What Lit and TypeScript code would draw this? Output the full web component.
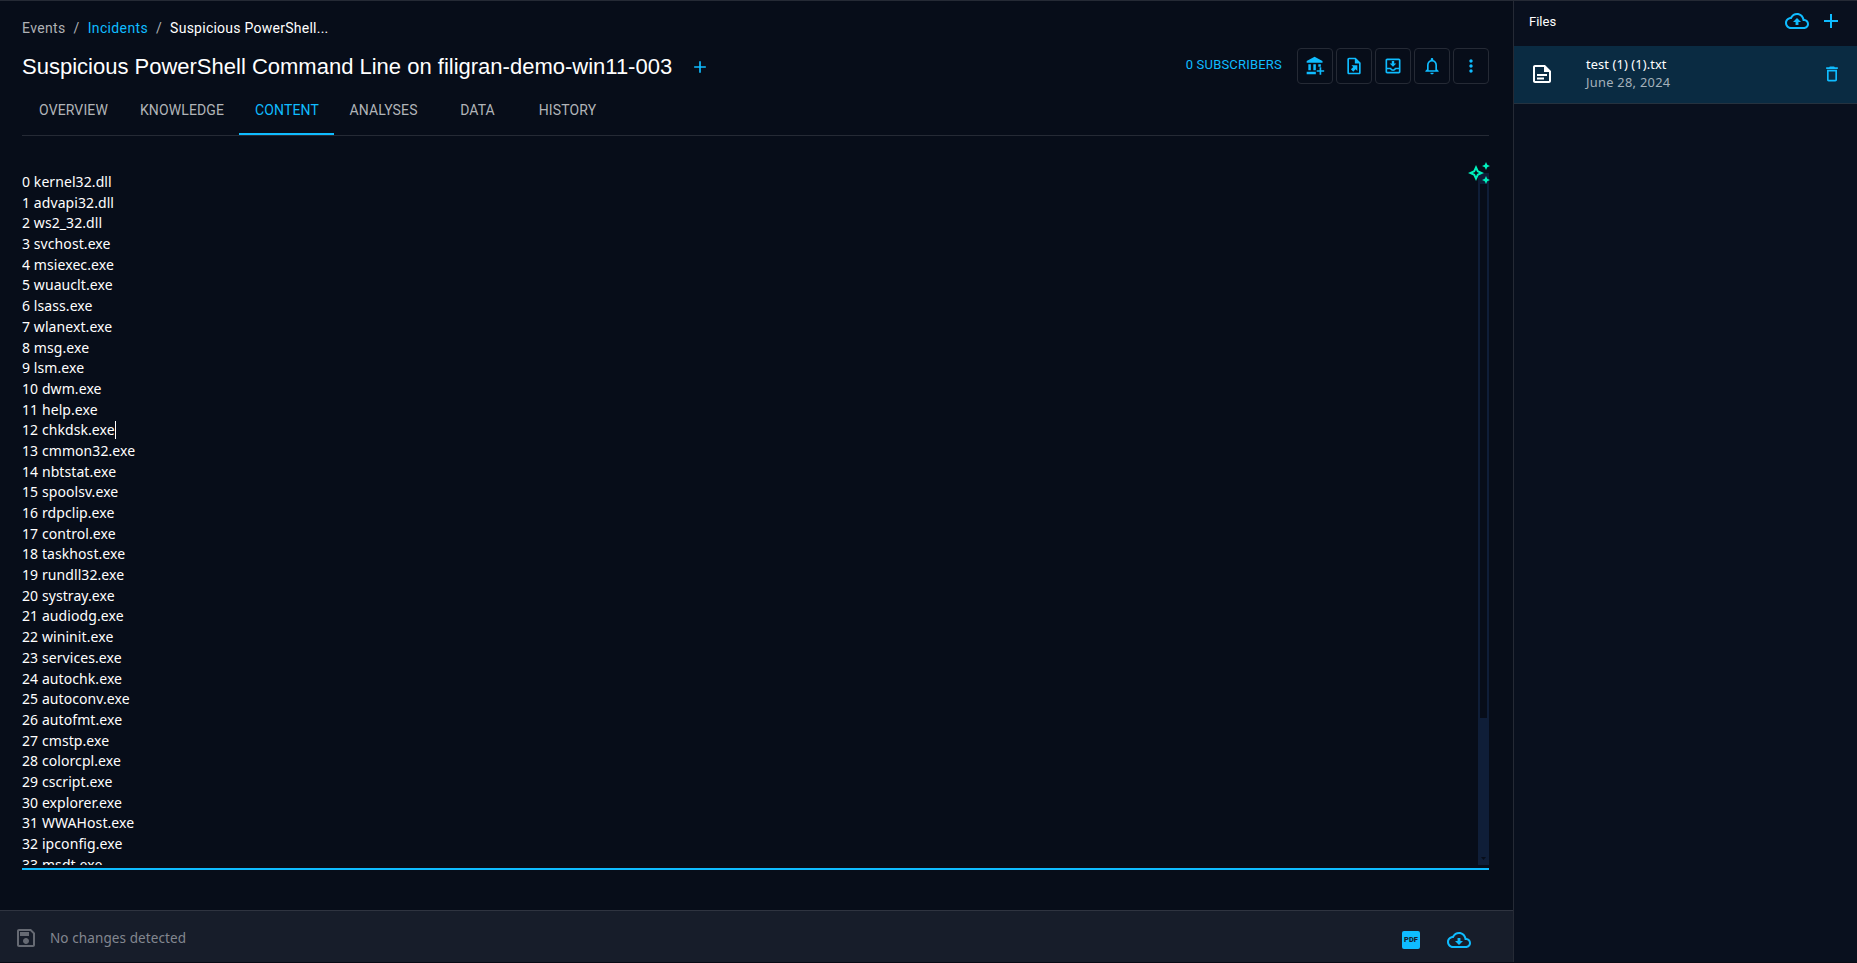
import { LitElement, html, css, svg } from "lit";
import { customElement } from "lit/decorators.js";

const cloud =
  "M19.35 10.04C18.67 6.59 15.64 4 12 4 9.11 4 6.6 5.64 5.35 8.04 2.34 8.36 0 10.91 0 14c0 3.31 2.69 6 6 6h13c2.76 0 5-2.24 5-5 0-2.64-2.05-4.78-4.65-4.96zM19 18H6c-2.21 0-4-1.79-4-4 0-2.05 1.53-3.76 3.56-3.97l1.07-.11.5-.95C8.08 7.14 9.94 6 12 6c2.62 0 4.88 1.86 5.39 4.43l.3 1.5 1.53.11c1.56.1 2.78 1.41 2.78 2.96 0 1.65-1.35 3-3 3z";

const icons: Record<string, string> = {
  plus: "M19 13h-6v6h-2v-6H5v-2h6V5h2v6h6v2z",
  bankPlus:
    "M11.5 1L2 6V8H21V6M4 10V17H7V10H4M10 10V17H13V10H10M16 10V13H19V10H16M2 19V22H13V19H2M17.5 13.5V17H14V19H17.5V22.5H19.5V19H23V17H19.5V13.5Z",
  fileExport:
    "M14,2H6C4.89,2 4,2.9 4,4V20C4,21.11 4.89,22 6,22H18C19.11,22 20,21.11 20,20V8L14,2M18,20H6V4H13V9H18V20M16,11V18.1L13.9,16L11.1,18.8L8.3,16L11.1,13.2L8.9,11H16Z",
  inbox:
    "M16 9h-2.55V6h-2.9v3H8l4 4zm3-6H4.99C3.88 3 3 3.9 3 5v14c0 1.1.88 2 1.99 2H19c1.1 0 2-.9 2-2V5c0-1.1-.9-2-2-2zm0 16H5v-3h3.56c.69 1.19 1.97 2 3.45 2s2.75-.81 3.45-2H19v3zm0-5h-4.99c0 1.1-.9 2-2 2s-2-.9-2-2H5l-.01-9H19v9z",
  bell: "M12 22c1.1 0 2-.9 2-2h-4c0 1.1.9 2 2 2zm6-6v-5c0-3.07-1.63-5.64-4.5-6.32V4c0-.83-.67-1.5-1.5-1.5s-1.5.67-1.5 1.5v.68C7.64 5.36 6 7.92 6 11v5l-2 2v1h16v-1l-2-2zm-2 1H8v-6c0-2.48 1.51-4.5 4-4.5s4 2.02 4 4.5v6z",
  more: "M12 8c1.1 0 2-.9 2-2s-.9-2-2-2-2 .9-2 2 .9 2 2 2zm0 2c-1.1 0-2 .9-2 2s.9 2 2 2 2-.9 2-2-.9-2-2-2zm0 6c-1.1 0-2 .9-2 2s.9 2 2 2 2-.9 2-2-.9-2-2-2z",
  upload: cloud + "M8 13h2.55v3h2.9v-3H16l-4-4z",
  download: cloud + "M13.45 10h-2.9v3H8l4 4 4-4h-2.55z",
  file: "M15 3H5C3.9 3 3 3.9 3 5v14c0 1.1.9 2 2 2h14c1.1 0 2-.9 2-2V9l-6-6zM5 19V5h9v5h5v9H5zM7 12.1h10v1.8H7zM7 15.6h7v1.8H7z",
  trash:
    "M6 19c0 1.1.9 2 2 2h8c1.1 0 2-.9 2-2V7H6v12zM8 9h8v10H8V9zm7.5-5-1-1h-5l-1 1H5v2h14V4z",
  save: "M17 3H5c-1.11 0-2 .9-2 2v14c0 1.1.89 2 2 2h14c1.1 0 2-.9 2-2V7l-4-4zm2 16H5V5h11.17L19 7.83V19zm-7-7c-1.66 0-3 1.34-3 3s1.34 3 3 3 3-1.34 3-3-1.34-3-3-3zM6 6h9v4H6z",
  sparkle:
    "m19 9 1.25-2.75L23 5l-2.75-1.25L19 1l-1.25 2.75L15 5l2.75 1.25L19 9zm0 6-1.25 2.75L15 19l2.75 1.25L19 23l1.25-2.75L23 19l-2.75-1.25L19 15zm-7.5-5.5L9 4 6.5 9.5 1 12l5.5 2.5L9 20l2.5-5.5L17 12l-5.5-2.5zm-1.51 3.49L9 15.17l-.99-2.18L5.83 12l2.18-.99L9 8.83l.99 2.18 2.17.99-2.17.99z",
};

const icon = (name: string, cls = "i20") =>
  html`<svg class=${cls} viewBox="0 0 24 24">${svg`<path fill="currentColor" fill-rule="evenodd" d=${icons[name]}></path>`}</svg>`;

const lines = [
  "kernel32.dll", "advapi32.dll", "ws2_32.dll", "svchost.exe", "msiexec.exe", "wuauclt.exe",
  "lsass.exe", "wlanext.exe", "msg.exe", "lsm.exe", "dwm.exe", "help.exe", "chkdsk.exe",
  "cmmon32.exe", "nbtstat.exe", "spoolsv.exe", "rdpclip.exe", "control.exe", "taskhost.exe",
  "rundll32.exe", "systray.exe", "audiodg.exe", "wininit.exe", "services.exe", "autochk.exe",
  "autoconv.exe", "autofmt.exe", "cmstp.exe", "colorcpl.exe", "cscript.exe", "explorer.exe",
  "WWAHost.exe", "ipconfig.exe", "msdt.exe",
];

const tabs = ["Overview", "Knowledge", "Content", "Analyses", "Data", "History"];
const tabWidths = [102, 115, 95, 98, 90, 90];

@customElement("app-root")
export class AppRoot extends LitElement {
  static styles = css`
    :host {
      display: grid;
      grid-template-columns: 1513px 1fr;
      box-sizing: border-box;
      height: 963px;
      border-top: 1px solid #252a35;
      border-bottom: 1px solid #070a14;
      background: #070d19;
      color: #fff;
      font-family: Roboto, "Noto Sans", sans-serif;
      font-size: 14px;
      overflow: hidden;
    }
    * { box-sizing: border-box; }
    svg { display: block; flex: none; }
    .i20 { width: 20px; height: 20px; }
    .i24 { width: 24px; height: 24px; }
    .blue { color: #0fbcff; }
    .main { display: flex; flex-direction: column; min-width: 0; }
    .page { flex: 1; display: flex; flex-direction: column; padding: 17px 24px 0 22px; min-height: 0; }
    .crumbs { display: flex; gap: 8px; height: 20px; line-height: 21px; color: #afb1b5; white-space: nowrap; letter-spacing: 0.35px; }
    .crumbs .here { letter-spacing: 0.25px; color: #fff; }
    .head { display: flex; align-items: center; height: 36px; margin-top: 10px; }
    h1 { margin: 0; font: 400 22px/38px "Liberation Sans", Arial, sans-serif; height: 36px; white-space: nowrap; }
    .add { margin: 2px 0 0 18px; }
    .subs { margin-left: auto; margin-right: 15px; font-size: 13px; line-height: 34px; height: 36px; letter-spacing: 0.2px; }
    .actions { display: flex; gap: 3px; }
    .btn { width: 36px; height: 36px; display: grid; place-items: center; border: 1px solid #252a35; border-radius: 4px; }
    .tabs { display: flex; height: 52px; border-bottom: 1px solid #252a35; color: #b1b4b8; }
    .tab { height: 51px; line-height: 53px; padding-left: 1px; text-align: center; text-transform: uppercase; white-space: nowrap; letter-spacing: 0.12px; }
    .tab.on { border-bottom: 2px solid #0fbcff; color: #0fbcff; }
    .editor { position: relative; display: flex; height: 697px; margin-top: 37px; border-bottom: 2px solid #0fbcff; }
    .text { flex: 1; height: 692px; overflow: hidden; font-family: "Noto Sans", sans-serif; font-size: 14px; letter-spacing: 0.08px; line-height: 18.69px; }
    .line { display: flex; align-items: flex-start; white-space: pre; height: 20.69px; }
    .caret { width: 1px; height: 18px; background: #fff; }
    .scroll { width: 11px; height: 692px; background: #0f1e38; padding: 11px 2px 0; display: flex; flex-direction: column; justify-content: space-between; align-items: center; }
    .thumb { width: 7px; height: 534px; background: #070d19; }
    .down { width: 5px; height: 3px; margin-bottom: 5px; background: #070d19; clip-path: polygon(0 0, 100% 0, 50% 100%); }
    .ai { position: absolute; right: -2px; top: -12px; color: #00f1bd; }
    .foot { height: 52px; display: flex; align-items: center; border-top: 1px solid #2f3440; background: #171d2a; padding: 3px 42px 0 14px; color: #838790; font-family: "Noto Sans", sans-serif; }
    .foot .msg { margin-left: 12px; line-height: 20px; font-size: 13.5px; letter-spacing: 0.1px; }
    .foot .save { color: #666a73; }
    .pdf { margin: 3px 27px 0 auto; width: 18px; height: 18px; border-radius: 2px; background: #0fbcff; color: #171d2a; font: 900 7.5px/18px Roboto, sans-serif; text-align: center; }
    .dl { margin-top: 3px; }
    .side { border-left: 1px solid #252a35; background: #09101e; }
    .sidehead { height: 45px; display: flex; align-items: center; padding: 0 14px 5px 15px; font-size: 13px; }
    .sidehead .up { margin-left: auto; margin-right: 10px; }
    .file { display: flex; align-items: center; height: 58px; background: #0a2b42; border-bottom: 1px solid #25323f; padding: 0 15px 1px 16px; }
    .meta { margin: 0 0 2px 32px; font-size: 12.8px; line-height: 18px; flex: 1; letter-spacing: 0.12px; font-family: "Noto Sans", sans-serif; }
    .date { color: #a4b1bb; letter-spacing: 0.3px; }
  `;

  render() {
    return html`
      <main class="main">
        <div class="page">
          <nav class="crumbs">
            <span>Events</span><span>/</span><span class="blue">Incidents</span><span>/</span>
            <span class="here">Suspicious PowerShell...</span>
          </nav>
          <header class="head">
            <h1>Suspicious PowerShell Command Line on filigran-demo-win11-003</h1>
            <span class="add blue">${icon("plus", "i20")}</span>
            <span class="subs blue">0 SUBSCRIBERS</span>
            <div class="actions blue">
              ${["bankPlus", "fileExport", "inbox", "bell", "more"].map((n) => html`<span class="btn">${icon(n)}</span>`)}
            </div>
          </header>
          <nav class="tabs">
            ${tabs.map((t, i) => html`<span class="tab ${i === 2 ? "on" : ""}" style="width:${tabWidths[i]}px">${t}</span>`)}
          </nav>
          <section class="editor">
            <div class="text">
              ${lines.map((l, i) => html`<div class="line">${i} ${l}${i === 12 ? html`<i class="caret"></i>` : ""}</div>`)}
            </div>
            <div class="scroll"><div class="thumb"></div><div class="down"></div></div>
            <span class="ai">${icon("sparkle", "i24")}</span>
          </section>
        </div>
        <footer class="foot">
          <span class="save">${icon("save", "i24")}</span>
          <span class="msg">No changes detected</span>
          <span class="pdf">PDF</span>
          <span class="dl blue">${icon("download", "i24")}</span>
        </footer>
      </main>
      <aside class="side">
        <div class="sidehead">
          <span>Files</span>
          <span class="up blue">${icon("upload", "i24")}</span>
          <span class="blue">${icon("plus", "i24")}</span>
        </div>
        <div class="file">
          ${icon("file", "i24")}
          <div class="meta"><div>test (1) (1).txt</div><div class="date">June 28, 2024</div></div>
          <span class="blue">${icon("trash")}</span>
        </div>
      </aside>
    `;
  }
}
